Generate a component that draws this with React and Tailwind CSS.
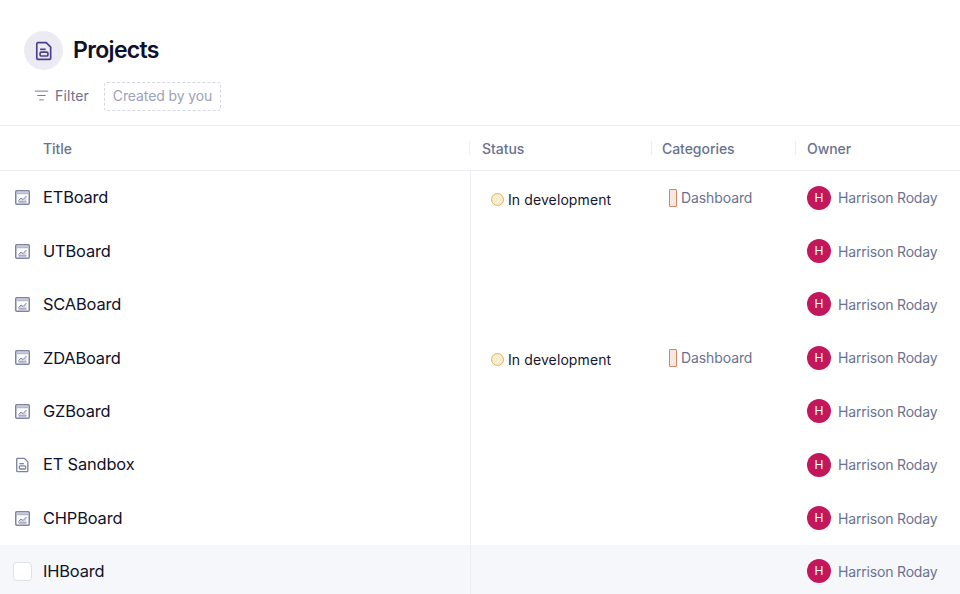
import { ListFilter } from 'lucide-react'

const rows = [
  { title: 'ETBoard', icon: 'board', status: true },
  { title: 'UTBoard', icon: 'board' },
  { title: 'SCABoard', icon: 'board' },
  { title: 'ZDABoard', icon: 'board', status: true },
  { title: 'GZBoard', icon: 'board' },
  { title: 'ET Sandbox', icon: 'doc' },
  { title: 'CHPBoard', icon: 'board' },
  { title: 'IHBoard', icon: 'check', hover: true },
]

const columns = [
  { label: 'Title', width: 'w-[470px]', padding: 'pl-[43px]' },
  { label: 'Status', width: 'w-[182px]', padding: 'pl-[12px]' },
  { label: 'Categories', width: 'w-[144px]', padding: 'pl-[10px]' },
  { label: 'Owner', width: 'flex-1', padding: 'pl-[11px]' },
]

function DocIcon({ className }) {
  return (
    <svg viewBox="0 0 16 18" fill="none" stroke="currentColor" className={className}>
      <path d="M2.5 1.5h7.5l4 4v10a1 1 0 0 1-1 1H2.5a1 1 0 0 1-1-1v-13a1 1 0 0 1 1-1z" strokeWidth="1.5" strokeLinejoin="round" />
      <path d="M4.5 7.5h5" strokeWidth="1.5" />
      <rect x="4.5" y="10" width="7" height="3.5" rx="1" strokeWidth="1.5" />
    </svg>
  )
}

function BoardIcon() {
  return (
    <svg viewBox="0 0 15 15" fill="none" className="h-[15px] w-[15px] shrink-0 text-[#7d84a0]" stroke="currentColor">
      <rect x="0.75" y="0.75" width="13.5" height="13.5" rx="1" fill="#ffffff" strokeWidth="1.5" />
      <path d="M1 3.25h13" stroke="#b4b9cb" strokeWidth="2" />
      <path d="M3.5 12v-1.5l2.5-2.5 2 1.5 3.5-3.5V12z" fill="#d5d8e4" stroke="none" />
      <path d="M3.5 10.5l2.5-2.5 2 1.5 3.5-3.5M3.5 12h8" strokeWidth="1" />
    </svg>
  )
}

function Row({ row }) {
  return (
    <div className={`flex h-[53.4px] ${row.hover ? 'bg-[#f6f7fa]' : ''}`}>
      <div className="flex w-[471px] shrink-0 items-center border-r border-[#eceef3]">
        <div className="flex w-[45px] shrink-0 justify-center pr-[1px]">
          {row.icon === 'board' && <BoardIcon />}
          {row.icon === 'doc' && <DocIcon className="h-[16px] w-[15px] text-[#7d84a0]" />}
          {row.icon === 'check' && (
            <div className="h-[19px] w-[19px] rounded-[4px] border border-[#dfe1e8] bg-white" />
          )}
        </div>
        <span className="ml-[-2px] text-[16.4px] tracking-[-0.15px] text-[#0f1029]">{row.title}</span>
      </div>
      <div className="flex w-[179px] shrink-0 items-center pl-[20px] pt-[3px]">
        {row.status && (
          <>
            <span className="h-[13px] w-[13px] rounded-full border border-[#dcb468] bg-[#f8edcf]" />
            <span className="ml-[4px] text-[14px] tracking-[0.1px] text-[#14152e]">In development</span>
          </>
        )}
      </div>
      <div className="flex w-[156px] shrink-0 items-center pl-[19px]">
        {row.status && (
          <>
            <span className="h-[18px] w-[8px] rounded-[1px] border border-[#d9825f] bg-[#f6e7e1]" />
            <span className="ml-[4px] text-[14px] tracking-[-0.1px] text-[#6a7290]">Dashboard</span>
          </>
        )}
      </div>
      <div className="flex flex-1 items-center pl-[1px]">
        <span className="flex h-[24px] w-[24px] items-center justify-center rounded-full bg-[#c2185b] text-[12px] text-white">H</span>
        <span className="ml-[7px] whitespace-nowrap text-[14px] tracking-[-0.18px] text-[#6a7290]">Harrison Roday</span>
      </div>
    </div>
  )
}

export default function App() {
  return (
    <div className="h-[594px] w-[960px] overflow-hidden bg-white font-['Inter',sans-serif]">
      <div className="flex h-[82px] items-start pl-[24px] pt-[31px]">
        <div className="flex h-[39px] w-[39px] items-center justify-center rounded-full bg-[#ecebf3]">
          <DocIcon className="h-[20px] w-[18px] text-[#4a3f8f]" />
        </div>
        <h1 className="ml-[10px] mt-[3px] text-[23px] leading-[32px] font-semibold tracking-[-0.65px] text-[#0f1029]">Projects</h1>
      </div>
      <div className="flex h-[44px] items-start border-b border-[#eceef3] pl-[34px]">
        <div className="flex h-[27px] items-center">
          <ListFilter className="h-[15px] w-[15px] text-[#6a7290]" strokeWidth={1.5} />
          <span className="ml-[6px] text-[14px] tracking-[0.15px] text-[#6a7290]">Filter</span>
        </div>
        <div className="ml-[15px] flex h-[29px] w-[117px] items-center justify-center rounded-[3px] border border-dashed border-[#d5d8e2] pb-[3px] text-[14px] tracking-[-0.1px] whitespace-nowrap text-[#9ca2b8]">
          Created by you
        </div>
      </div>
      <div className="flex h-[45px] border-b border-[#eceef3] text-[14px] font-medium tracking-[-0.05px] text-[#6a7290]">
        {columns.map((col, i) => (
          <div key={col.label} className={`flex shrink-0 items-center ${col.width} ${col.padding} ${i < 3 ? 'relative' : ''}`}>
            {col.label}
            {i < 3 && <span className="absolute top-[15px] right-0 h-[14px] w-[1px] bg-[#eceef3]" />}
          </div>
        ))}
      </div>
      {rows.map((row) => (
        <Row key={row.title} row={row} />
      ))}
    </div>
  )
}
